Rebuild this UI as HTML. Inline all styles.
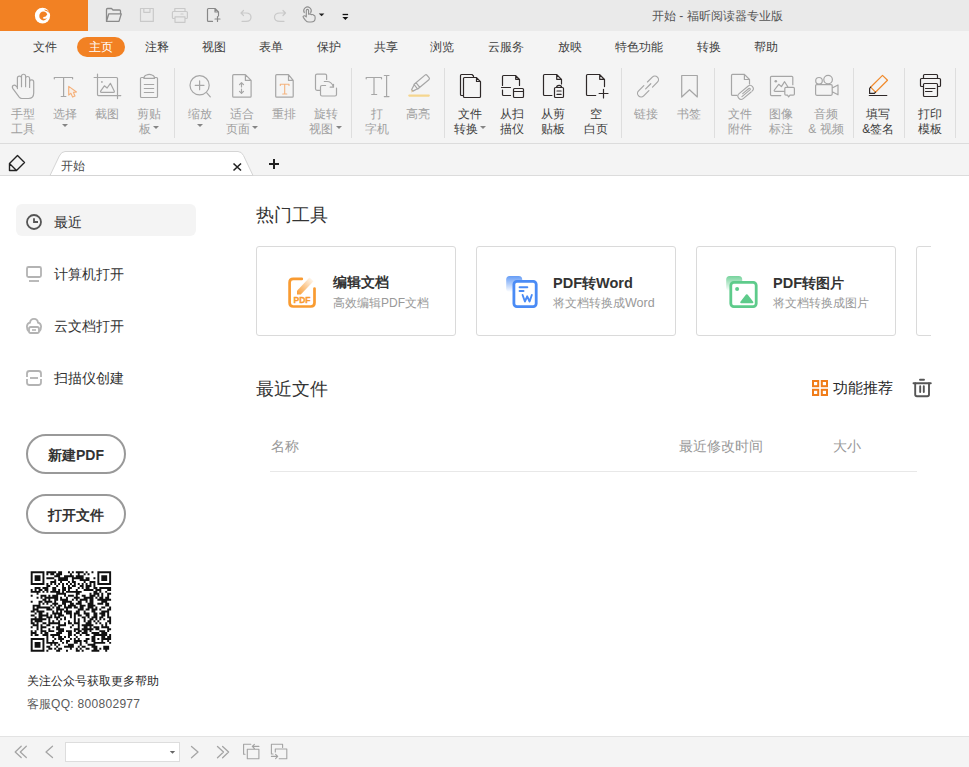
<!DOCTYPE html>
<html><head><meta charset='utf-8'><style>
html,body{margin:0;padding:0;}
body{width:969px;height:767px;position:relative;overflow:hidden;font-family:'Liberation Sans',sans-serif;background:#fff;}
.t{position:absolute;white-space:nowrap;}
.ar{display:inline-block;width:0;height:0;border-left:3px solid transparent;border-right:3px solid transparent;border-top:3px solid #858585;vertical-align:top;margin-left:2.5px;position:relative;top:3px}
.ar1{top:1px;margin-left:0}
svg{position:absolute;left:0;top:0;}
</style></head><body>
<svg width='969' height='767' viewBox='0 0 969 767'></svg>
<div style='position:absolute;left:0px;top:0px;width:969px;height:31px;background:#EAEAEA;'></div><div style='position:absolute;left:0px;top:0px;width:88px;height:31px;background:#F28123;'></div><div style='position:absolute;left:0px;top:31px;width:969px;height:112px;background:#F4F4F4;'></div><div style='position:absolute;left:0px;top:143px;width:969px;height:1px;background:#DCDCDC;'></div><div style='position:absolute;left:0px;top:144px;width:969px;height:31px;background:#F4F4F4;'></div><div style='position:absolute;left:0px;top:175px;width:969px;height:1px;background:#DCDCDC;'></div><div style='position:absolute;left:0px;top:176px;width:969px;height:560px;background:#FFFFFF;'></div><div style='position:absolute;left:0px;top:736px;width:969px;height:1px;background:#E3E3E3;'></div><div style='position:absolute;left:0px;top:737px;width:969px;height:30px;background:#F4F4F4;'></div><div class='t' style='left:652px;top:9.5px;font-size:12px;line-height:12px;color:#555;font-weight:normal;'>开始 - 福昕阅读器专业版</div><div style='position:absolute;left:77px;top:37px;width:48px;height:20px;background:#F28123;border-radius:10px;'></div><div class='t' style='left:89px;top:40.8px;font-size:12px;line-height:12px;color:#FFFFFF;font-weight:normal;'>主页</div><div class='t' style='left:33px;top:41px;font-size:12px;line-height:12px;color:#404040;font-weight:normal;'>文件</div><div class='t' style='left:145px;top:41px;font-size:12px;line-height:12px;color:#404040;font-weight:normal;'>注释</div><div class='t' style='left:202px;top:41px;font-size:12px;line-height:12px;color:#404040;font-weight:normal;'>视图</div><div class='t' style='left:259px;top:41px;font-size:12px;line-height:12px;color:#404040;font-weight:normal;'>表单</div><div class='t' style='left:317px;top:41px;font-size:12px;line-height:12px;color:#404040;font-weight:normal;'>保护</div><div class='t' style='left:374px;top:41px;font-size:12px;line-height:12px;color:#404040;font-weight:normal;'>共享</div><div class='t' style='left:430px;top:41px;font-size:12px;line-height:12px;color:#404040;font-weight:normal;'>浏览</div><div class='t' style='left:488px;top:41px;font-size:12px;line-height:12px;color:#404040;font-weight:normal;'>云服务</div><div class='t' style='left:558px;top:41px;font-size:12px;line-height:12px;color:#404040;font-weight:normal;'>放映</div><div class='t' style='left:615px;top:41px;font-size:12px;line-height:12px;color:#404040;font-weight:normal;'>特色功能</div><div class='t' style='left:697px;top:41px;font-size:12px;line-height:12px;color:#404040;font-weight:normal;'>转换</div><div class='t' style='left:754px;top:41px;font-size:12px;line-height:12px;color:#404040;font-weight:normal;'>帮助</div><div class='t' style='left:-7.399999999999999px;width:60px;text-align:center;top:108px;font-size:12px;line-height:12px;color:#A0A0A0;font-weight:normal;'>手型</div><div class='t' style='left:-7.399999999999999px;width:60px;text-align:center;top:123px;font-size:12px;line-height:12px;color:#A0A0A0;font-weight:normal;'>工具</div><div class='t' style='left:34.5px;width:60px;text-align:center;top:108px;font-size:12px;line-height:12px;color:#A0A0A0;font-weight:normal;'>选择</div><div class='t' style='left:34.5px;width:60px;text-align:center;top:123px;font-size:12px;line-height:12px;color:#A0A0A0;font-weight:normal;'><span class='ar ar1'></span></div><div class='t' style='left:76.5px;width:60px;text-align:center;top:108px;font-size:12px;line-height:12px;color:#A0A0A0;font-weight:normal;'>截图</div><div class='t' style='left:119.0px;width:60px;text-align:center;top:108px;font-size:12px;line-height:12px;color:#A0A0A0;font-weight:normal;'>剪贴</div><div class='t' style='left:119.0px;width:60px;text-align:center;top:123px;font-size:12px;line-height:12px;color:#A0A0A0;font-weight:normal;'>板<span class='ar'></span></div><div class='t' style='left:169.5px;width:60px;text-align:center;top:108px;font-size:12px;line-height:12px;color:#A0A0A0;font-weight:normal;'>缩放</div><div class='t' style='left:169.5px;width:60px;text-align:center;top:123px;font-size:12px;line-height:12px;color:#A0A0A0;font-weight:normal;'><span class='ar ar1'></span></div><div class='t' style='left:212.0px;width:60px;text-align:center;top:108px;font-size:12px;line-height:12px;color:#A0A0A0;font-weight:normal;'>适合</div><div class='t' style='left:212.0px;width:60px;text-align:center;top:123px;font-size:12px;line-height:12px;color:#A0A0A0;font-weight:normal;'>页面<span class='ar'></span></div><div class='t' style='left:253.7px;width:60px;text-align:center;top:108px;font-size:12px;line-height:12px;color:#A0A0A0;font-weight:normal;'>重排</div><div class='t' style='left:295.6px;width:60px;text-align:center;top:108px;font-size:12px;line-height:12px;color:#A0A0A0;font-weight:normal;'>旋转</div><div class='t' style='left:295.6px;width:60px;text-align:center;top:123px;font-size:12px;line-height:12px;color:#A0A0A0;font-weight:normal;'>视图<span class='ar'></span></div><div class='t' style='left:346.5px;width:60px;text-align:center;top:108px;font-size:12px;line-height:12px;color:#A0A0A0;font-weight:normal;'>打</div><div class='t' style='left:346.5px;width:60px;text-align:center;top:123px;font-size:12px;line-height:12px;color:#A0A0A0;font-weight:normal;'>字机</div><div class='t' style='left:388.0px;width:60px;text-align:center;top:108px;font-size:12px;line-height:12px;color:#A0A0A0;font-weight:normal;'>高亮</div><div class='t' style='left:439.8px;width:60px;text-align:center;top:108px;font-size:12px;line-height:12px;color:#404040;font-weight:normal;'>文件</div><div class='t' style='left:439.8px;width:60px;text-align:center;top:123px;font-size:12px;line-height:12px;color:#404040;font-weight:normal;'>转换<span class='ar'></span></div><div class='t' style='left:481.5px;width:60px;text-align:center;top:108px;font-size:12px;line-height:12px;color:#404040;font-weight:normal;'>从扫</div><div class='t' style='left:481.5px;width:60px;text-align:center;top:123px;font-size:12px;line-height:12px;color:#404040;font-weight:normal;'>描仪</div><div class='t' style='left:523.3px;width:60px;text-align:center;top:108px;font-size:12px;line-height:12px;color:#404040;font-weight:normal;'>从剪</div><div class='t' style='left:523.3px;width:60px;text-align:center;top:123px;font-size:12px;line-height:12px;color:#404040;font-weight:normal;'>贴板</div><div class='t' style='left:566.0px;width:60px;text-align:center;top:108px;font-size:12px;line-height:12px;color:#404040;font-weight:normal;'>空</div><div class='t' style='left:566.0px;width:60px;text-align:center;top:123px;font-size:12px;line-height:12px;color:#404040;font-weight:normal;'>白页</div><div class='t' style='left:616.0px;width:60px;text-align:center;top:108px;font-size:12px;line-height:12px;color:#A0A0A0;font-weight:normal;'>链接</div><div class='t' style='left:658.5px;width:60px;text-align:center;top:108px;font-size:12px;line-height:12px;color:#A0A0A0;font-weight:normal;'>书签</div><div class='t' style='left:709.6px;width:60px;text-align:center;top:108px;font-size:12px;line-height:12px;color:#A0A0A0;font-weight:normal;'>文件</div><div class='t' style='left:709.6px;width:60px;text-align:center;top:123px;font-size:12px;line-height:12px;color:#A0A0A0;font-weight:normal;'>附件</div><div class='t' style='left:751.2px;width:60px;text-align:center;top:108px;font-size:12px;line-height:12px;color:#A0A0A0;font-weight:normal;'>图像</div><div class='t' style='left:751.2px;width:60px;text-align:center;top:123px;font-size:12px;line-height:12px;color:#A0A0A0;font-weight:normal;'>标注</div><div class='t' style='left:796.0px;width:60px;text-align:center;top:108px;font-size:12px;line-height:12px;color:#A0A0A0;font-weight:normal;'>音频</div><div class='t' style='left:796.0px;width:60px;text-align:center;top:123px;font-size:12px;line-height:12px;color:#A0A0A0;font-weight:normal;'>&amp; 视频</div><div class='t' style='left:848.3px;width:60px;text-align:center;top:108px;font-size:12px;line-height:12px;color:#404040;font-weight:normal;'>填写</div><div class='t' style='left:848.3px;width:60px;text-align:center;top:123px;font-size:12px;line-height:12px;color:#404040;font-weight:normal;'>&amp;签名</div><div class='t' style='left:899.8px;width:60px;text-align:center;top:108px;font-size:12px;line-height:12px;color:#404040;font-weight:normal;'>打印</div><div class='t' style='left:899.8px;width:60px;text-align:center;top:123px;font-size:12px;line-height:12px;color:#404040;font-weight:normal;'>模板</div><div style='position:absolute;left:174px;top:68px;width:1px;height:70px;background:#DEDEDE;'></div><div style='position:absolute;left:351px;top:68px;width:1px;height:70px;background:#DEDEDE;'></div><div style='position:absolute;left:444px;top:68px;width:1px;height:70px;background:#DEDEDE;'></div><div style='position:absolute;left:621px;top:68px;width:1px;height:70px;background:#DEDEDE;'></div><div style='position:absolute;left:714px;top:68px;width:1px;height:70px;background:#DEDEDE;'></div><div style='position:absolute;left:853px;top:68px;width:1px;height:70px;background:#DEDEDE;'></div><div style='position:absolute;left:904px;top:68px;width:1px;height:70px;background:#DEDEDE;'></div><div style='position:absolute;left:955px;top:68px;width:1px;height:70px;background:#DEDEDE;'></div><svg width='969' height='767' viewBox='0 0 969 767'><path d='M50 175.5 L59.3 156 Q61.5 151.5 65 151.5 L238 151.5 Q241.5 151.5 243.5 155.5 L253 175.5 Z' fill='#fff' stroke='#D5D5D5' stroke-width='1'/></svg><div class='t' style='left:61px;top:159.5px;font-size:12px;line-height:12px;color:#4A4A4A;font-weight:normal;'>开始</div><div style='position:absolute;left:16px;top:204px;width:180px;height:32px;background:#F4F4F4;border-radius:6px;'></div><div class='t' style='left:54px;top:215px;font-size:14px;line-height:14px;color:#333;font-weight:normal;'>最近</div><div class='t' style='left:54px;top:267px;font-size:14px;line-height:14px;color:#333;font-weight:normal;'>计算机打开</div><div class='t' style='left:54px;top:319px;font-size:14px;line-height:14px;color:#333;font-weight:normal;'>云文档打开</div><div class='t' style='left:54px;top:371px;font-size:14px;line-height:14px;color:#333;font-weight:normal;'>扫描仪创建</div><div style='position:absolute;left:26px;top:434px;width:96px;height:36px;border:2px solid #999;border-radius:20px;'></div><div style='position:absolute;left:26px;top:494px;width:96px;height:36px;border:2px solid #999;border-radius:20px;'></div><div class='t' style='left:48px;top:448px;font-size:14px;line-height:14px;color:#333;font-weight:bold;'>新建PDF</div><div class='t' style='left:48px;top:508px;font-size:14px;line-height:14px;color:#333;font-weight:bold;'>打开文件</div><div class='t' style='left:27px;top:674.5px;font-size:12px;line-height:12px;color:#2A2A2A;font-weight:normal;'>关注公众号获取更多帮助</div><div class='t' style='left:27px;top:698px;font-size:12px;line-height:12px;color:#5A5A5A;font-weight:normal;'>客服<span style='letter-spacing:0.3px'>QQ: 800802977</span></div><div class='t' style='left:256px;top:206px;font-size:18px;line-height:18px;color:#333;font-weight:normal;'>热门工具</div><div style='position:absolute;left:256px;top:246px;width:198px;height:88px;border:1px solid #DADADA;border-radius:3px;background:#fff'></div><div style='position:absolute;left:476px;top:246px;width:198px;height:88px;border:1px solid #DADADA;border-radius:3px;background:#fff'></div><div style='position:absolute;left:696px;top:246px;width:198px;height:88px;border:1px solid #DADADA;border-radius:3px;background:#fff'></div><div style='position:absolute;left:916px;top:246px;width:198px;height:88px;border:1px solid #DADADA;border-radius:3px;background:#fff'></div><div style='position:absolute;left:931px;top:240px;width:38px;height:100px;background:#FFFFFF;'></div><div class='t' style='left:333px;top:276px;font-size:13.5px;line-height:13.5px;color:#333;font-weight:bold;'>编辑文档</div><div class='t' style='left:333px;top:296.5px;font-size:12px;line-height:12px;color:#999;font-weight:normal;'>高效编辑PDF文档</div><div class='t' style='left:553px;top:276px;font-size:14.5px;line-height:14.5px;color:#333;font-weight:bold;'>PDF<span style='font-size:13.5px'>转</span>Word</div><div class='t' style='left:553px;top:296.5px;font-size:12px;line-height:12px;color:#999;font-weight:normal;'>将文档转换成<span style='font-size:12.5px'>Word</span></div><div class='t' style='left:773px;top:276px;font-size:14.5px;line-height:14.5px;color:#333;font-weight:bold;'>PDF<span style='font-size:13.5px'>转图片</span></div><div class='t' style='left:773px;top:296.5px;font-size:12px;line-height:12px;color:#999;font-weight:normal;'>将文档转换成图片</div><div class='t' style='left:256px;top:380px;font-size:18px;line-height:18px;color:#333;font-weight:normal;'>最近文件</div><div class='t' style='left:833px;top:381px;font-size:14.5px;line-height:14.5px;color:#2A2A2A;font-weight:normal;'>功能推荐</div><div class='t' style='left:270.5px;top:438.5px;font-size:14px;line-height:14px;color:#999;font-weight:normal;'>名称</div><div class='t' style='left:679px;top:438.5px;font-size:14px;line-height:14px;color:#999;font-weight:normal;'>最近修改时间</div><div class='t' style='left:833px;top:438.5px;font-size:14px;line-height:14px;color:#999;font-weight:normal;'>大小</div><div style='position:absolute;left:270px;top:471px;width:647px;height:1px;background:#E8E8E8;'></div><div style='position:absolute;left:65px;top:742px;width:113px;height:18px;border:1px solid #DDDDDD;background:#fff'></div>
<svg width='969' height='767' viewBox='0 0 969 767'>
<ellipse cx='42.5' cy='15.7' rx='7.6' ry='7.9' fill='#fff'/><ellipse cx='43.4' cy='15.9' rx='4.1' ry='4.5' fill='#F28123'/><path d='M42.8 18.2 Q45.8 19.6 48 17.4 Q48.8 16 48.6 13.8 L46.8 15 Q46 17 43.6 16.9 Z' fill='#fff'/><path d='M44.6 9.9 Q48.2 10.4 50.5 13.8' fill='none' stroke='#F28123' stroke-width='1'/><path d='M106.5 21.4 V9.5 Q106.5 8.5 107.5 8.5 H111.5 L113 10 H119.5 Q120.5 10 120.5 11 V13 M106.5 21.4 L108.8 13.8 H121.3 L119 21.4 Z' fill='none' stroke='#8A8A8A' stroke-width='1.3' stroke-linecap='round' stroke-linejoin='round' /><path d='M140.5 8.5 H153.3 V21.4 H140.5 Z M143.8 8.5 V12.3 H150 V8.5' fill='none' stroke='#C9C9C9' stroke-width='1.2' stroke-linecap='round' stroke-linejoin='round' /><path d='M174.8 11.5 V8.5 H185 V11.5 M175 18.5 H173.4 Q172.4 18.5 172.4 17.5 V12.5 Q172.4 11.5 173.4 11.5 H186.4 Q187.4 11.5 187.4 12.5 V17.5 Q187.4 18.5 186.4 18.5 H185 M175 16.8 H185 V22.3 H175 Z M181 14 H183' fill='none' stroke='#C9C9C9' stroke-width='1.2' stroke-linecap='round' stroke-linejoin='round' /><path d='M212.5 21.4 H208.5 Q207.5 21.4 207.5 20.4 V9.5 Q207.5 8.5 208.5 8.5 H215 L218.5 12 V16 M215 8.5 V12 H218.5 M215 19 H220 M217.5 16.5 V21.5' fill='none' stroke='#888' stroke-width='1.2' stroke-linecap='round' stroke-linejoin='round' /><path d='M243.5 10.5 L241 13 L243.5 15.5 M241.2 13 H246 Q251 13 251 17.2 Q251 21.3 246 21.3 H242' fill='none' stroke='#C9C9C9' stroke-width='1.2' stroke-linecap='round' stroke-linejoin='round' /><path d='M283 10.5 L285.5 13 L283 15.5 M285.3 13 H280 Q274.5 13 274.5 17.2 Q274.5 21.3 280 21.3 H284' fill='none' stroke='#C9C9C9' stroke-width='1.2' stroke-linecap='round' stroke-linejoin='round' /><path d='M306.3 16.5 V10.6 Q306.3 9.4 307.45 9.4 Q308.6 9.4 308.6 10.6 V14.2 Q310.3 13.4 311.3 14.6 Q313 14.1 314 15.4 Q315.1 15.6 315.1 17.1 V18.6 Q315.1 22 311 22 H309 Q307 22 305.5 20.3 L303.3 17.3 Q302.7 16.3 303.7 15.9 Q304.8 15.5 306.3 16.9 M304.3 12.6 A3.7 3.7 0 1 1 310.7 12.6' fill='none' stroke='#8E8E8E' stroke-width='1.1' stroke-linecap='round' stroke-linejoin='round' /><path d='M318.8 13.4 H324.4 L321.6 16.3 Z' fill='#222'/><path d='M342.6 14.5 H348.1' stroke='#111' stroke-width='1.3'/><path d='M342.4 16.9 H348.3 L345.35 20 Z' fill='#111'/><path d='M17.4 88.6 V78.1 A2.05 2.05 0 0 1 21.5 78.1 V76.3 A2.05 2.05 0 0 1 25.6 76.3 V78.1 A2.05 2.05 0 0 1 29.6 78.1 V82 A2.05 2.05 0 0 1 33.7 82 V93 Q33.7 98.5 28.5 98.5 H21.8 Q20.2 98.5 19.2 97.2 L12.9 88.6 Q11.7 86.6 13.1 85.5 Q14.6 84.5 16.2 86.1 L17.4 87.5 M21.5 78.1 V86.7 M25.6 76.3 V86.7 M29.6 82 V87.5' fill='none' stroke='#A6A6A6' stroke-width='1.2' stroke-linecap='round' stroke-linejoin='round' /><path d='M54.3 78.8 V77.5 H72.6 V78.8 M63.6 77.5 V96.5 M61.2 96.5 H65.9' fill='none' stroke='#A6A6A6' stroke-width='1.2' stroke-linecap='round' stroke-linejoin='round' /><path d='M68.7 86.4 V95.1 L70.9 93.3 L72.6 97.1 L75 96 L73.4 92.4 L76.5 92 Z' fill='#F8EEE6' stroke='#F4B07A' stroke-width='1.1' stroke-linejoin='round'/><path d='M94.1 77.5 H116.5 Q117.5 77.5 117.5 78.5 V98.6 M97.5 74.1 V94.6 Q97.5 95.6 98.5 95.6 H120.8' fill='none' stroke='#A6A6A6' stroke-width='1.2' stroke-linecap='round' stroke-linejoin='round' /><path d='M101.5 92.3 Q100 92.3 100.8 90.9 L104.4 85.8 L107.1 88 L110.4 83.3 L114.2 90.9 Q114.9 92.3 113.4 92.3 Z' fill='none' stroke='#A6A6A6' stroke-width='1.2' stroke-linecap='round' stroke-linejoin='round' /><circle cx='101.9' cy='81.9' r='0.9' fill='#A6A6A6'/><path d='M143.8 77.5 H141.5 Q140.5 77.5 140.5 78.5 V96.5 Q140.5 97.5 141.5 97.5 H156.5 Q157.5 97.5 157.5 96.5 V78.5 Q157.5 77.5 156.5 77.5 H154.6 M143.9 78.4 H154.6 Q154.6 75.8 152 75 Q150.5 74.3 149.25 74.3 Q148 74.3 146.5 75 Q143.9 75.8 143.9 78.4 Z M144.3 84.5 H153.7 M144.3 88.5 H153.7 M144.3 92.5 H153.7' fill='none' stroke='#A6A6A6' stroke-width='1.2' stroke-linecap='round' stroke-linejoin='round' /><path d='M206.8 92.8 L210.3 96.8 M195.2 85.3 H204 M199.6 80.9 V89.7' fill='none' stroke='#A6A6A6' stroke-width='1.2' stroke-linecap='round' stroke-linejoin='round' /><circle cx='199.6' cy='85.3' r='9.6' fill='none' stroke='#A6A6A6' stroke-width='1.2'/><path d='M245.4 74.7 H233.7 Q232.7 74.7 232.7 75.7 V96.2 Q232.7 97.2 233.7 97.2 H250.1 Q251.1 97.2 251.1 96.2 V80.4 Z M245.4 74.7 V80.4 H251.1 M239.5 84.7 L241.5 82.7 L243.5 84.7 M241.5 82.9 V87 M241.5 89.2 V93.4 M239.5 91.4 L241.5 93.4 L243.5 91.4' fill='none' stroke='#A6A6A6' stroke-width='1.2' stroke-linecap='round' stroke-linejoin='round' /><path d='M288.5 74.7 H276.7 Q275.7 74.7 275.7 75.7 V96.2 Q275.7 97.2 276.7 97.2 H292.2 Q293.2 97.2 293.2 96.2 V80.4 Z M288.5 74.7 V80.4 H293.2' fill='none' stroke='#A6A6A6' stroke-width='1.2' stroke-linecap='round' stroke-linejoin='round' /><path d='M280.3 85.5 V84.2 H289 V85.5 M284.7 84.2 V94 M282.7 94 H286.8' fill='none' stroke='#F4B27C' stroke-width='1.1' stroke-linecap='round' stroke-linejoin='round' /><path d='M320.4 90.3 H317 Q315.5 90.3 315.5 88.8 V75.6 Q315.5 74.1 317 74.1 H325.1 Q326.6 74.1 326.6 75.6 V79.4' fill='none' stroke='#A6A6A6' stroke-width='1.2' stroke-linecap='round' stroke-linejoin='round' /><path d='M325.6 85.5 H322 Q320.5 85.5 320.5 87 V94.5 Q320.5 96 322 96 H335 Q336.5 96 336.5 94.5 V88.2 M324.3 81.5 H327 Q331.5 81.5 333.5 87 M333.5 84.3 V87.2 H330.2' fill='none' stroke='#A6A6A6' stroke-width='1.2' stroke-linecap='round' stroke-linejoin='round' /><path d='M366.2 78.8 V77.5 H381.5 V78.8 M374 77.5 V94.5 M371.7 94.5 H376.7 M386.6 75.5 V96.6 M384.3 75.5 H389 M384.3 96.6 H389' fill='none' stroke='#A6A6A6' stroke-width='1.2' stroke-linecap='round' stroke-linejoin='round' /><g transform='translate(418.5,84.5) rotate(-40)'><path d='M-3.5 -3 H11 Q12.5 -3 12.5 -1.5 V1.5 Q12.5 3 11 3 H-3.5 Z M-0.8 -3 V3 M-3.5 -2.5 L-8.5 -0.5 V1.5 L-3.5 2.5' fill='none' stroke='#A6A6A6' stroke-width='1.2' stroke-linejoin='round'/><path d='M-8.5 -0.5 L-10.5 1.8 L-8.5 1.5 Z' fill='#D9B77B'/></g><path d='M409.3 95.6 H428.8' fill='none' stroke='#F5D68F' stroke-width='2.2' stroke-linecap='round' stroke-linejoin='round' /><path d='M463.5 95.5 H461.5 Q460.5 95.5 460.5 94.5 V75.5 Q460.5 74.5 461.5 74.5 H472 L473.5 76 V77.5 M476.3 77.5 H464.5 Q463.5 77.5 463.5 78.5 V96.5 Q463.5 97.5 464.5 97.5 H479.5 Q480.5 97.5 480.5 96.5 V81.7 Z M476.5 77.7 V81.5 H480.3' fill='none' stroke='#2E2828' stroke-width='1.2' stroke-linecap='round' stroke-linejoin='round' /><path d='M502.5 85.5 V76.5 Q502.5 75.5 503.5 75.5 H515.5 L519.5 79.5 V85.5 M515.7 75.7 V79.3 H519.3 M502.5 90 V94.5 Q502.5 95.5 503.5 95.5 H510.5 M501.5 87.5 H510.5 M514.5 88.5 H522.5 Q523.5 88.5 523.5 89.5 V96.5 Q523.5 97.5 522.5 97.5 H514.5 Q513.5 97.5 513.5 96.5 V89.5 Q513.5 88.5 514.5 88.5 Z M513.5 91.5 H523.5' fill='none' stroke='#2E2828' stroke-width='1.2' stroke-linecap='round' stroke-linejoin='round' /><path d='M551.9 95.5 H544.5 Q543.5 95.5 543.5 94.5 V75.5 Q543.5 74.5 544.5 74.5 H556.6 L561.5 79.4 V83.9 M556.7 74.7 V79.3 H561.3 M555.5 87.5 Q554.5 87.5 554.5 88.5 V96.5 Q554.5 97.5 555.5 97.5 H562.5 Q563.5 97.5 563.5 96.5 V88.5 Q563.5 87.5 562.5 87.5 M556.6 87.5 Q556.6 85.4 559.1 85.4 Q561.6 85.4 561.6 87.5 Z M557 91 H561.1 M557 94.4 H561.1' fill='none' stroke='#2E2828' stroke-width='1.2' stroke-linecap='round' stroke-linejoin='round' /><path d='M595.7 95.5 H587.5 Q586.5 95.5 586.5 94.5 V75.5 Q586.5 74.5 587.5 74.5 H599.5 L604.5 79.5 V86.6 M599.7 74.7 V79.3 H604.3 M599.1 93.5 H608 M603.5 89.3 V97.9' fill='none' stroke='#2E2828' stroke-width='1.2' stroke-linecap='round' stroke-linejoin='round' /><g transform='translate(647.5,87) rotate(-45)' fill='none' stroke='#A6A6A6' stroke-width='1.2' stroke-linecap='round'><path d='M3.5 -3.6 H10.4 A3.6 3.6 0 0 1 10.4 3.6 H3.5 M-1.6 -3.6 H-9 A3.6 3.6 0 0 0 -9 3.6 H-1.6 M-2.6 0 H4.6'/></g><path d='M681.7 75.5 H697.3 V97 L689.5 89.7 L681.7 97 Z' fill='none' stroke='#A6A6A6' stroke-width='1.2' stroke-linecap='round' stroke-linejoin='round' /><path d='M736.8 95.4 H732.5 Q731.5 95.4 731.5 94.4 V75.4 Q731.5 74.4 732.5 74.4 H744.4 L749.5 79.5 V83.9 M744.4 74.4 V79.5 H749.5' fill='none' stroke='#A6A6A6' stroke-width='1.2' stroke-linecap='round' stroke-linejoin='round' /><g transform='translate(745.6,92.4) rotate(-40)' fill='none' stroke='#A6A6A6' stroke-width='1.1' stroke-linecap='round'><path d='M4.5 3.2 H-5.8 A3.2 3.2 0 0 1 -5.8 -3.2 H5.8 A3.2 3.2 0 0 1 5.8 3.2 M-5.5 0.9 H5 A0.9 0.9 0 0 0 5 -0.9 H-3'/></g><path d='M780.8 95.6 H771.5 Q770.5 95.6 770.5 94.6 V77.3 Q770.5 76.3 771.5 76.3 H791.8 Q792.8 76.3 792.8 77.3 V84.7 M784.4 91.3 H775.3 Q773.6 91.3 774.4 90 L778.7 84.3 L781.4 86.6 L784.6 81.7 L787.8 86.8' fill='none' stroke='#A6A6A6' stroke-width='1.2' stroke-linecap='round' stroke-linejoin='round' /><circle cx='775.8' cy='81.3' r='1.3' fill='#A6A6A6'/><path d='M786 87.3 H793.2 Q794.4 87.3 794.4 88.5 V94 Q794.4 95.2 793.2 95.2 H790 L788.6 96.9 L787.6 95.2 H786 Q784.8 95.2 784.8 94 V88.5 Q784.8 87.3 786 87.3 Z' fill='none' stroke='#A6A6A6' stroke-width='1.2' stroke-linecap='round' stroke-linejoin='round' /><g fill='none' stroke='#A6A6A6' stroke-width='1.2'><circle cx='819' cy='80.8' r='3.3'/><circle cx='828.1' cy='79.6' r='4.3'/></g><path d='M816.8 84.6 H831 Q832.2 84.6 832.2 85.8 V94.1 Q832.2 95.3 831 95.3 H816.8 Q815.6 95.3 815.6 94.1 V85.8 Q815.6 84.6 816.8 84.6 Z M832.2 88 L838 85 V94.8 L832.2 91.8' fill='none' stroke='#A6A6A6' stroke-width='1.2' stroke-linecap='round' stroke-linejoin='round' /><path d='M870.6 87.2 L882.5 75.4 L887.5 80.3 L875.5 92.2 Z' fill='none' stroke='#F08A2C' stroke-width='1.2' stroke-linecap='round' stroke-linejoin='round' /><path d='M870.6 87.2 L869.6 88.5 V93.4 H874.4 L875.5 92.2' fill='none' stroke='#2E2828' stroke-width='1.2' stroke-linecap='round' stroke-linejoin='round' /><path d='M869.3 95.5 H886.8' fill='none' stroke='#2E2828' stroke-width='1.2' stroke-linecap='round' stroke-linejoin='round' /><path d='M923.5 78.5 V75.5 Q923.5 74.5 924.5 74.5 H936.5 Q937.5 74.5 937.5 75.5 V78.5 M923 86.5 H921.5 Q920.5 86.5 920.5 85.5 V79.5 Q920.5 78.5 921.5 78.5 H939.5 Q940.5 78.5 940.5 79.5 V85.5 Q940.5 86.5 939.5 86.5 H938 M924.5 83.5 H936.5 Q937.5 83.5 937.5 84.5 V95.5 Q937.5 96.5 936.5 96.5 H924.5 Q923.5 96.5 923.5 95.5 V84.5 Q923.5 83.5 924.5 83.5 Z M925.5 88.5 H935 M925.5 91.5 H932' fill='none' stroke='#2E2828' stroke-width='1.2' stroke-linecap='round' stroke-linejoin='round' /><path d='M233.5 163.5 L241 170.5 M241 163.5 L233.5 170.5' stroke='#222' stroke-width='1.6'/><path d='M269 164 H279 M274 159 V169' stroke='#222' stroke-width='2'/><path d='M9.5 163.5 L17.5 155.5 L24.5 162.5 L16.5 170.5 H9.5 Z M9.5 163.5 L16.5 170.5' fill='none' stroke='#222' stroke-width='1.4' stroke-linejoin='round'/><circle cx='34' cy='222' r='7' fill='none' stroke='#555' stroke-width='1.8'/><path d='M34 218.2 V222 H38' fill='none' stroke='#555' stroke-width='1.8'/><rect x='27' y='267' width='14' height='10' rx='1.5' fill='none' stroke='#B3B3B3' stroke-width='1.8'/><path d='M29 281 H39' stroke='#B3B3B3' stroke-width='1.8'/><path d='M28.7 331.5 Q26.9 329.5 26.9 326.5 Q27.1 323.3 30 322.7 Q30.4 318.9 34 318.9 Q37.6 318.9 38 322.7 Q40.9 323.3 41.1 326.5 Q41.1 329.5 39.3 331.5' fill='none' stroke='#B3B3B3' stroke-width='1.8'/><rect x='29' y='327' width='10' height='6' rx='1.8' fill='#fff' stroke='#B3B3B3' stroke-width='1.8'/><path d='M32 330 H36' stroke='#B3B3B3' stroke-width='1.6'/><path d='M27 377 V373.5 Q27 371 29.5 371 H38.5 Q41 371 41 373.5 V377 M27 379 V382.5 Q27 385 29.5 385 H38.5 Q41 385 41 382.5 V379' fill='none' stroke='#B3B3B3' stroke-width='1.8'/><path d='M30 378 H38' stroke='#B3B3B3' stroke-width='1.8'/><path d='M30.70 571.30h1.96v1.96h-1.96zM32.66 571.30h1.96v1.96h-1.96zM34.62 571.30h1.96v1.96h-1.96zM36.58 571.30h1.96v1.96h-1.96zM38.54 571.30h1.96v1.96h-1.96zM40.50 571.30h1.96v1.96h-1.96zM42.47 571.30h1.96v1.96h-1.96zM46.39 571.30h1.96v1.96h-1.96zM48.35 571.30h1.96v1.96h-1.96zM50.31 571.30h1.96v1.96h-1.96zM52.27 571.30h1.96v1.96h-1.96zM54.23 571.30h1.96v1.96h-1.96zM58.15 571.30h1.96v1.96h-1.96zM60.11 571.30h1.96v1.96h-1.96zM67.96 571.30h1.96v1.96h-1.96zM71.88 571.30h1.96v1.96h-1.96zM75.80 571.30h1.96v1.96h-1.96zM77.76 571.30h1.96v1.96h-1.96zM79.72 571.30h1.96v1.96h-1.96zM81.69 571.30h1.96v1.96h-1.96zM85.61 571.30h1.96v1.96h-1.96zM91.49 571.30h1.96v1.96h-1.96zM97.37 571.30h1.96v1.96h-1.96zM99.33 571.30h1.96v1.96h-1.96zM101.30 571.30h1.96v1.96h-1.96zM103.26 571.30h1.96v1.96h-1.96zM105.22 571.30h1.96v1.96h-1.96zM107.18 571.30h1.96v1.96h-1.96zM109.14 571.30h1.96v1.96h-1.96zM30.70 573.26h1.96v1.96h-1.96zM42.47 573.26h1.96v1.96h-1.96zM46.39 573.26h1.96v1.96h-1.96zM50.31 573.26h1.96v1.96h-1.96zM52.27 573.26h1.96v1.96h-1.96zM56.19 573.26h1.96v1.96h-1.96zM58.15 573.26h1.96v1.96h-1.96zM60.11 573.26h1.96v1.96h-1.96zM69.92 573.26h1.96v1.96h-1.96zM77.76 573.26h1.96v1.96h-1.96zM83.65 573.26h1.96v1.96h-1.96zM87.57 573.26h1.96v1.96h-1.96zM97.37 573.26h1.96v1.96h-1.96zM109.14 573.26h1.96v1.96h-1.96zM30.70 575.22h1.96v1.96h-1.96zM34.62 575.22h1.96v1.96h-1.96zM36.58 575.22h1.96v1.96h-1.96zM38.54 575.22h1.96v1.96h-1.96zM42.47 575.22h1.96v1.96h-1.96zM54.23 575.22h1.96v1.96h-1.96zM56.19 575.22h1.96v1.96h-1.96zM58.15 575.22h1.96v1.96h-1.96zM64.04 575.22h1.96v1.96h-1.96zM66.00 575.22h1.96v1.96h-1.96zM67.96 575.22h1.96v1.96h-1.96zM69.92 575.22h1.96v1.96h-1.96zM71.88 575.22h1.96v1.96h-1.96zM75.80 575.22h1.96v1.96h-1.96zM77.76 575.22h1.96v1.96h-1.96zM79.72 575.22h1.96v1.96h-1.96zM81.69 575.22h1.96v1.96h-1.96zM97.37 575.22h1.96v1.96h-1.96zM101.30 575.22h1.96v1.96h-1.96zM103.26 575.22h1.96v1.96h-1.96zM105.22 575.22h1.96v1.96h-1.96zM109.14 575.22h1.96v1.96h-1.96zM30.70 577.18h1.96v1.96h-1.96zM34.62 577.18h1.96v1.96h-1.96zM36.58 577.18h1.96v1.96h-1.96zM38.54 577.18h1.96v1.96h-1.96zM42.47 577.18h1.96v1.96h-1.96zM46.39 577.18h1.96v1.96h-1.96zM48.35 577.18h1.96v1.96h-1.96zM50.31 577.18h1.96v1.96h-1.96zM52.27 577.18h1.96v1.96h-1.96zM58.15 577.18h1.96v1.96h-1.96zM60.11 577.18h1.96v1.96h-1.96zM62.08 577.18h1.96v1.96h-1.96zM64.04 577.18h1.96v1.96h-1.96zM66.00 577.18h1.96v1.96h-1.96zM71.88 577.18h1.96v1.96h-1.96zM73.84 577.18h1.96v1.96h-1.96zM75.80 577.18h1.96v1.96h-1.96zM77.76 577.18h1.96v1.96h-1.96zM79.72 577.18h1.96v1.96h-1.96zM81.69 577.18h1.96v1.96h-1.96zM85.61 577.18h1.96v1.96h-1.96zM87.57 577.18h1.96v1.96h-1.96zM93.45 577.18h1.96v1.96h-1.96zM97.37 577.18h1.96v1.96h-1.96zM101.30 577.18h1.96v1.96h-1.96zM103.26 577.18h1.96v1.96h-1.96zM105.22 577.18h1.96v1.96h-1.96zM109.14 577.18h1.96v1.96h-1.96zM30.70 579.14h1.96v1.96h-1.96zM34.62 579.14h1.96v1.96h-1.96zM36.58 579.14h1.96v1.96h-1.96zM38.54 579.14h1.96v1.96h-1.96zM42.47 579.14h1.96v1.96h-1.96zM54.23 579.14h1.96v1.96h-1.96zM58.15 579.14h1.96v1.96h-1.96zM60.11 579.14h1.96v1.96h-1.96zM62.08 579.14h1.96v1.96h-1.96zM64.04 579.14h1.96v1.96h-1.96zM66.00 579.14h1.96v1.96h-1.96zM71.88 579.14h1.96v1.96h-1.96zM79.72 579.14h1.96v1.96h-1.96zM81.69 579.14h1.96v1.96h-1.96zM83.65 579.14h1.96v1.96h-1.96zM85.61 579.14h1.96v1.96h-1.96zM87.57 579.14h1.96v1.96h-1.96zM97.37 579.14h1.96v1.96h-1.96zM101.30 579.14h1.96v1.96h-1.96zM103.26 579.14h1.96v1.96h-1.96zM105.22 579.14h1.96v1.96h-1.96zM109.14 579.14h1.96v1.96h-1.96zM30.70 581.10h1.96v1.96h-1.96zM42.47 581.10h1.96v1.96h-1.96zM50.31 581.10h1.96v1.96h-1.96zM52.27 581.10h1.96v1.96h-1.96zM54.23 581.10h1.96v1.96h-1.96zM60.11 581.10h1.96v1.96h-1.96zM67.96 581.10h1.96v1.96h-1.96zM71.88 581.10h1.96v1.96h-1.96zM73.84 581.10h1.96v1.96h-1.96zM83.65 581.10h1.96v1.96h-1.96zM89.53 581.10h1.96v1.96h-1.96zM91.49 581.10h1.96v1.96h-1.96zM93.45 581.10h1.96v1.96h-1.96zM97.37 581.10h1.96v1.96h-1.96zM109.14 581.10h1.96v1.96h-1.96zM30.70 583.07h1.96v1.96h-1.96zM32.66 583.07h1.96v1.96h-1.96zM34.62 583.07h1.96v1.96h-1.96zM36.58 583.07h1.96v1.96h-1.96zM38.54 583.07h1.96v1.96h-1.96zM40.50 583.07h1.96v1.96h-1.96zM42.47 583.07h1.96v1.96h-1.96zM46.39 583.07h1.96v1.96h-1.96zM50.31 583.07h1.96v1.96h-1.96zM54.23 583.07h1.96v1.96h-1.96zM58.15 583.07h1.96v1.96h-1.96zM62.08 583.07h1.96v1.96h-1.96zM66.00 583.07h1.96v1.96h-1.96zM69.92 583.07h1.96v1.96h-1.96zM73.84 583.07h1.96v1.96h-1.96zM77.76 583.07h1.96v1.96h-1.96zM81.69 583.07h1.96v1.96h-1.96zM85.61 583.07h1.96v1.96h-1.96zM89.53 583.07h1.96v1.96h-1.96zM93.45 583.07h1.96v1.96h-1.96zM97.37 583.07h1.96v1.96h-1.96zM99.33 583.07h1.96v1.96h-1.96zM101.30 583.07h1.96v1.96h-1.96zM103.26 583.07h1.96v1.96h-1.96zM105.22 583.07h1.96v1.96h-1.96zM107.18 583.07h1.96v1.96h-1.96zM109.14 583.07h1.96v1.96h-1.96zM46.39 585.03h1.96v1.96h-1.96zM48.35 585.03h1.96v1.96h-1.96zM56.19 585.03h1.96v1.96h-1.96zM62.08 585.03h1.96v1.96h-1.96zM67.96 585.03h1.96v1.96h-1.96zM71.88 585.03h1.96v1.96h-1.96zM73.84 585.03h1.96v1.96h-1.96zM79.72 585.03h1.96v1.96h-1.96zM81.69 585.03h1.96v1.96h-1.96zM85.61 585.03h1.96v1.96h-1.96zM87.57 585.03h1.96v1.96h-1.96zM89.53 585.03h1.96v1.96h-1.96zM93.45 585.03h1.96v1.96h-1.96zM34.62 586.99h1.96v1.96h-1.96zM36.58 586.99h1.96v1.96h-1.96zM38.54 586.99h1.96v1.96h-1.96zM42.47 586.99h1.96v1.96h-1.96zM44.43 586.99h1.96v1.96h-1.96zM46.39 586.99h1.96v1.96h-1.96zM52.27 586.99h1.96v1.96h-1.96zM54.23 586.99h1.96v1.96h-1.96zM62.08 586.99h1.96v1.96h-1.96zM64.04 586.99h1.96v1.96h-1.96zM67.96 586.99h1.96v1.96h-1.96zM69.92 586.99h1.96v1.96h-1.96zM77.76 586.99h1.96v1.96h-1.96zM81.69 586.99h1.96v1.96h-1.96zM85.61 586.99h1.96v1.96h-1.96zM87.57 586.99h1.96v1.96h-1.96zM93.45 586.99h1.96v1.96h-1.96zM95.41 586.99h1.96v1.96h-1.96zM99.33 586.99h1.96v1.96h-1.96zM101.30 586.99h1.96v1.96h-1.96zM103.26 586.99h1.96v1.96h-1.96zM105.22 586.99h1.96v1.96h-1.96zM107.18 586.99h1.96v1.96h-1.96zM109.14 586.99h1.96v1.96h-1.96zM30.70 588.95h1.96v1.96h-1.96zM34.62 588.95h1.96v1.96h-1.96zM38.54 588.95h1.96v1.96h-1.96zM40.50 588.95h1.96v1.96h-1.96zM44.43 588.95h1.96v1.96h-1.96zM46.39 588.95h1.96v1.96h-1.96zM52.27 588.95h1.96v1.96h-1.96zM54.23 588.95h1.96v1.96h-1.96zM58.15 588.95h1.96v1.96h-1.96zM62.08 588.95h1.96v1.96h-1.96zM64.04 588.95h1.96v1.96h-1.96zM67.96 588.95h1.96v1.96h-1.96zM75.80 588.95h1.96v1.96h-1.96zM83.65 588.95h1.96v1.96h-1.96zM85.61 588.95h1.96v1.96h-1.96zM87.57 588.95h1.96v1.96h-1.96zM89.53 588.95h1.96v1.96h-1.96zM91.49 588.95h1.96v1.96h-1.96zM95.41 588.95h1.96v1.96h-1.96zM97.37 588.95h1.96v1.96h-1.96zM99.33 588.95h1.96v1.96h-1.96zM107.18 588.95h1.96v1.96h-1.96zM109.14 588.95h1.96v1.96h-1.96zM30.70 590.91h1.96v1.96h-1.96zM32.66 590.91h1.96v1.96h-1.96zM34.62 590.91h1.96v1.96h-1.96zM36.58 590.91h1.96v1.96h-1.96zM38.54 590.91h1.96v1.96h-1.96zM42.47 590.91h1.96v1.96h-1.96zM46.39 590.91h1.96v1.96h-1.96zM50.31 590.91h1.96v1.96h-1.96zM52.27 590.91h1.96v1.96h-1.96zM54.23 590.91h1.96v1.96h-1.96zM56.19 590.91h1.96v1.96h-1.96zM58.15 590.91h1.96v1.96h-1.96zM62.08 590.91h1.96v1.96h-1.96zM66.00 590.91h1.96v1.96h-1.96zM67.96 590.91h1.96v1.96h-1.96zM69.92 590.91h1.96v1.96h-1.96zM71.88 590.91h1.96v1.96h-1.96zM73.84 590.91h1.96v1.96h-1.96zM75.80 590.91h1.96v1.96h-1.96zM77.76 590.91h1.96v1.96h-1.96zM79.72 590.91h1.96v1.96h-1.96zM93.45 590.91h1.96v1.96h-1.96zM95.41 590.91h1.96v1.96h-1.96zM99.33 590.91h1.96v1.96h-1.96zM105.22 590.91h1.96v1.96h-1.96zM36.58 592.87h1.96v1.96h-1.96zM56.19 592.87h1.96v1.96h-1.96zM58.15 592.87h1.96v1.96h-1.96zM60.11 592.87h1.96v1.96h-1.96zM62.08 592.87h1.96v1.96h-1.96zM64.04 592.87h1.96v1.96h-1.96zM75.80 592.87h1.96v1.96h-1.96zM77.76 592.87h1.96v1.96h-1.96zM89.53 592.87h1.96v1.96h-1.96zM93.45 592.87h1.96v1.96h-1.96zM95.41 592.87h1.96v1.96h-1.96zM97.37 592.87h1.96v1.96h-1.96zM101.30 592.87h1.96v1.96h-1.96zM107.18 592.87h1.96v1.96h-1.96zM109.14 592.87h1.96v1.96h-1.96zM30.70 594.83h1.96v1.96h-1.96zM40.50 594.83h1.96v1.96h-1.96zM42.47 594.83h1.96v1.96h-1.96zM44.43 594.83h1.96v1.96h-1.96zM48.35 594.83h1.96v1.96h-1.96zM52.27 594.83h1.96v1.96h-1.96zM54.23 594.83h1.96v1.96h-1.96zM56.19 594.83h1.96v1.96h-1.96zM64.04 594.83h1.96v1.96h-1.96zM67.96 594.83h1.96v1.96h-1.96zM69.92 594.83h1.96v1.96h-1.96zM71.88 594.83h1.96v1.96h-1.96zM75.80 594.83h1.96v1.96h-1.96zM81.69 594.83h1.96v1.96h-1.96zM83.65 594.83h1.96v1.96h-1.96zM89.53 594.83h1.96v1.96h-1.96zM91.49 594.83h1.96v1.96h-1.96zM93.45 594.83h1.96v1.96h-1.96zM97.37 594.83h1.96v1.96h-1.96zM101.30 594.83h1.96v1.96h-1.96zM107.18 594.83h1.96v1.96h-1.96zM36.58 596.79h1.96v1.96h-1.96zM40.50 596.79h1.96v1.96h-1.96zM44.43 596.79h1.96v1.96h-1.96zM46.39 596.79h1.96v1.96h-1.96zM48.35 596.79h1.96v1.96h-1.96zM50.31 596.79h1.96v1.96h-1.96zM52.27 596.79h1.96v1.96h-1.96zM54.23 596.79h1.96v1.96h-1.96zM56.19 596.79h1.96v1.96h-1.96zM60.11 596.79h1.96v1.96h-1.96zM66.00 596.79h1.96v1.96h-1.96zM73.84 596.79h1.96v1.96h-1.96zM75.80 596.79h1.96v1.96h-1.96zM77.76 596.79h1.96v1.96h-1.96zM83.65 596.79h1.96v1.96h-1.96zM85.61 596.79h1.96v1.96h-1.96zM87.57 596.79h1.96v1.96h-1.96zM89.53 596.79h1.96v1.96h-1.96zM91.49 596.79h1.96v1.96h-1.96zM95.41 596.79h1.96v1.96h-1.96zM99.33 596.79h1.96v1.96h-1.96zM101.30 596.79h1.96v1.96h-1.96zM105.22 596.79h1.96v1.96h-1.96zM107.18 596.79h1.96v1.96h-1.96zM42.47 598.75h1.96v1.96h-1.96zM44.43 598.75h1.96v1.96h-1.96zM48.35 598.75h1.96v1.96h-1.96zM54.23 598.75h1.96v1.96h-1.96zM56.19 598.75h1.96v1.96h-1.96zM60.11 598.75h1.96v1.96h-1.96zM62.08 598.75h1.96v1.96h-1.96zM64.04 598.75h1.96v1.96h-1.96zM66.00 598.75h1.96v1.96h-1.96zM71.88 598.75h1.96v1.96h-1.96zM75.80 598.75h1.96v1.96h-1.96zM79.72 598.75h1.96v1.96h-1.96zM81.69 598.75h1.96v1.96h-1.96zM83.65 598.75h1.96v1.96h-1.96zM85.61 598.75h1.96v1.96h-1.96zM89.53 598.75h1.96v1.96h-1.96zM91.49 598.75h1.96v1.96h-1.96zM97.37 598.75h1.96v1.96h-1.96zM99.33 598.75h1.96v1.96h-1.96zM101.30 598.75h1.96v1.96h-1.96zM103.26 598.75h1.96v1.96h-1.96zM105.22 598.75h1.96v1.96h-1.96zM107.18 598.75h1.96v1.96h-1.96zM109.14 598.75h1.96v1.96h-1.96zM30.70 600.71h1.96v1.96h-1.96zM38.54 600.71h1.96v1.96h-1.96zM40.50 600.71h1.96v1.96h-1.96zM44.43 600.71h1.96v1.96h-1.96zM46.39 600.71h1.96v1.96h-1.96zM48.35 600.71h1.96v1.96h-1.96zM50.31 600.71h1.96v1.96h-1.96zM54.23 600.71h1.96v1.96h-1.96zM62.08 600.71h1.96v1.96h-1.96zM64.04 600.71h1.96v1.96h-1.96zM66.00 600.71h1.96v1.96h-1.96zM67.96 600.71h1.96v1.96h-1.96zM69.92 600.71h1.96v1.96h-1.96zM77.76 600.71h1.96v1.96h-1.96zM79.72 600.71h1.96v1.96h-1.96zM85.61 600.71h1.96v1.96h-1.96zM89.53 600.71h1.96v1.96h-1.96zM91.49 600.71h1.96v1.96h-1.96zM101.30 600.71h1.96v1.96h-1.96zM103.26 600.71h1.96v1.96h-1.96zM105.22 600.71h1.96v1.96h-1.96zM38.54 602.68h1.96v1.96h-1.96zM42.47 602.68h1.96v1.96h-1.96zM46.39 602.68h1.96v1.96h-1.96zM52.27 602.68h1.96v1.96h-1.96zM54.23 602.68h1.96v1.96h-1.96zM56.19 602.68h1.96v1.96h-1.96zM62.08 602.68h1.96v1.96h-1.96zM64.04 602.68h1.96v1.96h-1.96zM69.92 602.68h1.96v1.96h-1.96zM71.88 602.68h1.96v1.96h-1.96zM75.80 602.68h1.96v1.96h-1.96zM77.76 602.68h1.96v1.96h-1.96zM79.72 602.68h1.96v1.96h-1.96zM87.57 602.68h1.96v1.96h-1.96zM89.53 602.68h1.96v1.96h-1.96zM91.49 602.68h1.96v1.96h-1.96zM97.37 602.68h1.96v1.96h-1.96zM99.33 602.68h1.96v1.96h-1.96zM101.30 602.68h1.96v1.96h-1.96zM105.22 602.68h1.96v1.96h-1.96zM107.18 602.68h1.96v1.96h-1.96zM32.66 604.64h1.96v1.96h-1.96zM34.62 604.64h1.96v1.96h-1.96zM36.58 604.64h1.96v1.96h-1.96zM38.54 604.64h1.96v1.96h-1.96zM50.31 604.64h1.96v1.96h-1.96zM54.23 604.64h1.96v1.96h-1.96zM58.15 604.64h1.96v1.96h-1.96zM60.11 604.64h1.96v1.96h-1.96zM64.04 604.64h1.96v1.96h-1.96zM67.96 604.64h1.96v1.96h-1.96zM69.92 604.64h1.96v1.96h-1.96zM71.88 604.64h1.96v1.96h-1.96zM73.84 604.64h1.96v1.96h-1.96zM79.72 604.64h1.96v1.96h-1.96zM81.69 604.64h1.96v1.96h-1.96zM83.65 604.64h1.96v1.96h-1.96zM87.57 604.64h1.96v1.96h-1.96zM89.53 604.64h1.96v1.96h-1.96zM91.49 604.64h1.96v1.96h-1.96zM93.45 604.64h1.96v1.96h-1.96zM105.22 604.64h1.96v1.96h-1.96zM107.18 604.64h1.96v1.96h-1.96zM32.66 606.60h1.96v1.96h-1.96zM36.58 606.60h1.96v1.96h-1.96zM38.54 606.60h1.96v1.96h-1.96zM40.50 606.60h1.96v1.96h-1.96zM42.47 606.60h1.96v1.96h-1.96zM44.43 606.60h1.96v1.96h-1.96zM46.39 606.60h1.96v1.96h-1.96zM48.35 606.60h1.96v1.96h-1.96zM52.27 606.60h1.96v1.96h-1.96zM56.19 606.60h1.96v1.96h-1.96zM58.15 606.60h1.96v1.96h-1.96zM64.04 606.60h1.96v1.96h-1.96zM66.00 606.60h1.96v1.96h-1.96zM67.96 606.60h1.96v1.96h-1.96zM69.92 606.60h1.96v1.96h-1.96zM73.84 606.60h1.96v1.96h-1.96zM75.80 606.60h1.96v1.96h-1.96zM79.72 606.60h1.96v1.96h-1.96zM81.69 606.60h1.96v1.96h-1.96zM87.57 606.60h1.96v1.96h-1.96zM89.53 606.60h1.96v1.96h-1.96zM91.49 606.60h1.96v1.96h-1.96zM95.41 606.60h1.96v1.96h-1.96zM101.30 606.60h1.96v1.96h-1.96zM103.26 606.60h1.96v1.96h-1.96zM109.14 606.60h1.96v1.96h-1.96zM32.66 608.56h1.96v1.96h-1.96zM34.62 608.56h1.96v1.96h-1.96zM36.58 608.56h1.96v1.96h-1.96zM46.39 608.56h1.96v1.96h-1.96zM48.35 608.56h1.96v1.96h-1.96zM50.31 608.56h1.96v1.96h-1.96zM56.19 608.56h1.96v1.96h-1.96zM58.15 608.56h1.96v1.96h-1.96zM60.11 608.56h1.96v1.96h-1.96zM62.08 608.56h1.96v1.96h-1.96zM66.00 608.56h1.96v1.96h-1.96zM77.76 608.56h1.96v1.96h-1.96zM79.72 608.56h1.96v1.96h-1.96zM81.69 608.56h1.96v1.96h-1.96zM85.61 608.56h1.96v1.96h-1.96zM87.57 608.56h1.96v1.96h-1.96zM91.49 608.56h1.96v1.96h-1.96zM93.45 608.56h1.96v1.96h-1.96zM95.41 608.56h1.96v1.96h-1.96zM99.33 608.56h1.96v1.96h-1.96zM107.18 608.56h1.96v1.96h-1.96zM109.14 608.56h1.96v1.96h-1.96zM30.70 610.52h1.96v1.96h-1.96zM32.66 610.52h1.96v1.96h-1.96zM36.58 610.52h1.96v1.96h-1.96zM38.54 610.52h1.96v1.96h-1.96zM40.50 610.52h1.96v1.96h-1.96zM42.47 610.52h1.96v1.96h-1.96zM52.27 610.52h1.96v1.96h-1.96zM56.19 610.52h1.96v1.96h-1.96zM60.11 610.52h1.96v1.96h-1.96zM64.04 610.52h1.96v1.96h-1.96zM66.00 610.52h1.96v1.96h-1.96zM67.96 610.52h1.96v1.96h-1.96zM69.92 610.52h1.96v1.96h-1.96zM75.80 610.52h1.96v1.96h-1.96zM77.76 610.52h1.96v1.96h-1.96zM83.65 610.52h1.96v1.96h-1.96zM91.49 610.52h1.96v1.96h-1.96zM93.45 610.52h1.96v1.96h-1.96zM101.30 610.52h1.96v1.96h-1.96zM103.26 610.52h1.96v1.96h-1.96zM105.22 610.52h1.96v1.96h-1.96zM107.18 610.52h1.96v1.96h-1.96zM34.62 612.48h1.96v1.96h-1.96zM38.54 612.48h1.96v1.96h-1.96zM40.50 612.48h1.96v1.96h-1.96zM46.39 612.48h1.96v1.96h-1.96zM52.27 612.48h1.96v1.96h-1.96zM54.23 612.48h1.96v1.96h-1.96zM56.19 612.48h1.96v1.96h-1.96zM58.15 612.48h1.96v1.96h-1.96zM60.11 612.48h1.96v1.96h-1.96zM66.00 612.48h1.96v1.96h-1.96zM67.96 612.48h1.96v1.96h-1.96zM69.92 612.48h1.96v1.96h-1.96zM73.84 612.48h1.96v1.96h-1.96zM75.80 612.48h1.96v1.96h-1.96zM77.76 612.48h1.96v1.96h-1.96zM83.65 612.48h1.96v1.96h-1.96zM85.61 612.48h1.96v1.96h-1.96zM87.57 612.48h1.96v1.96h-1.96zM93.45 612.48h1.96v1.96h-1.96zM95.41 612.48h1.96v1.96h-1.96zM99.33 612.48h1.96v1.96h-1.96zM101.30 612.48h1.96v1.96h-1.96zM103.26 612.48h1.96v1.96h-1.96zM107.18 612.48h1.96v1.96h-1.96zM30.70 614.44h1.96v1.96h-1.96zM32.66 614.44h1.96v1.96h-1.96zM38.54 614.44h1.96v1.96h-1.96zM40.50 614.44h1.96v1.96h-1.96zM42.47 614.44h1.96v1.96h-1.96zM44.43 614.44h1.96v1.96h-1.96zM46.39 614.44h1.96v1.96h-1.96zM50.31 614.44h1.96v1.96h-1.96zM54.23 614.44h1.96v1.96h-1.96zM58.15 614.44h1.96v1.96h-1.96zM60.11 614.44h1.96v1.96h-1.96zM62.08 614.44h1.96v1.96h-1.96zM69.92 614.44h1.96v1.96h-1.96zM73.84 614.44h1.96v1.96h-1.96zM77.76 614.44h1.96v1.96h-1.96zM79.72 614.44h1.96v1.96h-1.96zM85.61 614.44h1.96v1.96h-1.96zM87.57 614.44h1.96v1.96h-1.96zM93.45 614.44h1.96v1.96h-1.96zM95.41 614.44h1.96v1.96h-1.96zM101.30 614.44h1.96v1.96h-1.96zM103.26 614.44h1.96v1.96h-1.96zM107.18 614.44h1.96v1.96h-1.96zM34.62 616.40h1.96v1.96h-1.96zM38.54 616.40h1.96v1.96h-1.96zM40.50 616.40h1.96v1.96h-1.96zM46.39 616.40h1.96v1.96h-1.96zM48.35 616.40h1.96v1.96h-1.96zM50.31 616.40h1.96v1.96h-1.96zM54.23 616.40h1.96v1.96h-1.96zM56.19 616.40h1.96v1.96h-1.96zM58.15 616.40h1.96v1.96h-1.96zM64.04 616.40h1.96v1.96h-1.96zM69.92 616.40h1.96v1.96h-1.96zM73.84 616.40h1.96v1.96h-1.96zM81.69 616.40h1.96v1.96h-1.96zM83.65 616.40h1.96v1.96h-1.96zM87.57 616.40h1.96v1.96h-1.96zM91.49 616.40h1.96v1.96h-1.96zM93.45 616.40h1.96v1.96h-1.96zM95.41 616.40h1.96v1.96h-1.96zM99.33 616.40h1.96v1.96h-1.96zM101.30 616.40h1.96v1.96h-1.96zM107.18 616.40h1.96v1.96h-1.96zM109.14 616.40h1.96v1.96h-1.96zM30.70 618.36h1.96v1.96h-1.96zM32.66 618.36h1.96v1.96h-1.96zM34.62 618.36h1.96v1.96h-1.96zM36.58 618.36h1.96v1.96h-1.96zM38.54 618.36h1.96v1.96h-1.96zM40.50 618.36h1.96v1.96h-1.96zM42.47 618.36h1.96v1.96h-1.96zM44.43 618.36h1.96v1.96h-1.96zM48.35 618.36h1.96v1.96h-1.96zM56.19 618.36h1.96v1.96h-1.96zM60.11 618.36h1.96v1.96h-1.96zM64.04 618.36h1.96v1.96h-1.96zM73.84 618.36h1.96v1.96h-1.96zM77.76 618.36h1.96v1.96h-1.96zM83.65 618.36h1.96v1.96h-1.96zM89.53 618.36h1.96v1.96h-1.96zM91.49 618.36h1.96v1.96h-1.96zM95.41 618.36h1.96v1.96h-1.96zM99.33 618.36h1.96v1.96h-1.96zM103.26 618.36h1.96v1.96h-1.96zM109.14 618.36h1.96v1.96h-1.96zM30.70 620.32h1.96v1.96h-1.96zM34.62 620.32h1.96v1.96h-1.96zM36.58 620.32h1.96v1.96h-1.96zM38.54 620.32h1.96v1.96h-1.96zM40.50 620.32h1.96v1.96h-1.96zM48.35 620.32h1.96v1.96h-1.96zM52.27 620.32h1.96v1.96h-1.96zM58.15 620.32h1.96v1.96h-1.96zM67.96 620.32h1.96v1.96h-1.96zM73.84 620.32h1.96v1.96h-1.96zM77.76 620.32h1.96v1.96h-1.96zM83.65 620.32h1.96v1.96h-1.96zM87.57 620.32h1.96v1.96h-1.96zM89.53 620.32h1.96v1.96h-1.96zM93.45 620.32h1.96v1.96h-1.96zM97.37 620.32h1.96v1.96h-1.96zM107.18 620.32h1.96v1.96h-1.96zM109.14 620.32h1.96v1.96h-1.96zM30.70 622.29h1.96v1.96h-1.96zM32.66 622.29h1.96v1.96h-1.96zM36.58 622.29h1.96v1.96h-1.96zM42.47 622.29h1.96v1.96h-1.96zM44.43 622.29h1.96v1.96h-1.96zM48.35 622.29h1.96v1.96h-1.96zM50.31 622.29h1.96v1.96h-1.96zM52.27 622.29h1.96v1.96h-1.96zM54.23 622.29h1.96v1.96h-1.96zM56.19 622.29h1.96v1.96h-1.96zM58.15 622.29h1.96v1.96h-1.96zM64.04 622.29h1.96v1.96h-1.96zM67.96 622.29h1.96v1.96h-1.96zM69.92 622.29h1.96v1.96h-1.96zM73.84 622.29h1.96v1.96h-1.96zM75.80 622.29h1.96v1.96h-1.96zM77.76 622.29h1.96v1.96h-1.96zM85.61 622.29h1.96v1.96h-1.96zM87.57 622.29h1.96v1.96h-1.96zM89.53 622.29h1.96v1.96h-1.96zM95.41 622.29h1.96v1.96h-1.96zM99.33 622.29h1.96v1.96h-1.96zM105.22 622.29h1.96v1.96h-1.96zM109.14 622.29h1.96v1.96h-1.96zM32.66 624.25h1.96v1.96h-1.96zM34.62 624.25h1.96v1.96h-1.96zM36.58 624.25h1.96v1.96h-1.96zM40.50 624.25h1.96v1.96h-1.96zM46.39 624.25h1.96v1.96h-1.96zM48.35 624.25h1.96v1.96h-1.96zM58.15 624.25h1.96v1.96h-1.96zM60.11 624.25h1.96v1.96h-1.96zM62.08 624.25h1.96v1.96h-1.96zM64.04 624.25h1.96v1.96h-1.96zM71.88 624.25h1.96v1.96h-1.96zM77.76 624.25h1.96v1.96h-1.96zM81.69 624.25h1.96v1.96h-1.96zM83.65 624.25h1.96v1.96h-1.96zM85.61 624.25h1.96v1.96h-1.96zM87.57 624.25h1.96v1.96h-1.96zM89.53 624.25h1.96v1.96h-1.96zM91.49 624.25h1.96v1.96h-1.96zM101.30 624.25h1.96v1.96h-1.96zM105.22 624.25h1.96v1.96h-1.96zM30.70 626.21h1.96v1.96h-1.96zM36.58 626.21h1.96v1.96h-1.96zM40.50 626.21h1.96v1.96h-1.96zM42.47 626.21h1.96v1.96h-1.96zM44.43 626.21h1.96v1.96h-1.96zM52.27 626.21h1.96v1.96h-1.96zM56.19 626.21h1.96v1.96h-1.96zM58.15 626.21h1.96v1.96h-1.96zM69.92 626.21h1.96v1.96h-1.96zM77.76 626.21h1.96v1.96h-1.96zM83.65 626.21h1.96v1.96h-1.96zM85.61 626.21h1.96v1.96h-1.96zM89.53 626.21h1.96v1.96h-1.96zM93.45 626.21h1.96v1.96h-1.96zM95.41 626.21h1.96v1.96h-1.96zM97.37 626.21h1.96v1.96h-1.96zM101.30 626.21h1.96v1.96h-1.96zM103.26 626.21h1.96v1.96h-1.96zM105.22 626.21h1.96v1.96h-1.96zM107.18 626.21h1.96v1.96h-1.96zM36.58 628.17h1.96v1.96h-1.96zM40.50 628.17h1.96v1.96h-1.96zM48.35 628.17h1.96v1.96h-1.96zM56.19 628.17h1.96v1.96h-1.96zM58.15 628.17h1.96v1.96h-1.96zM60.11 628.17h1.96v1.96h-1.96zM62.08 628.17h1.96v1.96h-1.96zM73.84 628.17h1.96v1.96h-1.96zM75.80 628.17h1.96v1.96h-1.96zM77.76 628.17h1.96v1.96h-1.96zM81.69 628.17h1.96v1.96h-1.96zM83.65 628.17h1.96v1.96h-1.96zM85.61 628.17h1.96v1.96h-1.96zM87.57 628.17h1.96v1.96h-1.96zM89.53 628.17h1.96v1.96h-1.96zM91.49 628.17h1.96v1.96h-1.96zM95.41 628.17h1.96v1.96h-1.96zM97.37 628.17h1.96v1.96h-1.96zM107.18 628.17h1.96v1.96h-1.96zM109.14 628.17h1.96v1.96h-1.96zM30.70 630.13h1.96v1.96h-1.96zM34.62 630.13h1.96v1.96h-1.96zM40.50 630.13h1.96v1.96h-1.96zM42.47 630.13h1.96v1.96h-1.96zM44.43 630.13h1.96v1.96h-1.96zM48.35 630.13h1.96v1.96h-1.96zM50.31 630.13h1.96v1.96h-1.96zM52.27 630.13h1.96v1.96h-1.96zM58.15 630.13h1.96v1.96h-1.96zM60.11 630.13h1.96v1.96h-1.96zM62.08 630.13h1.96v1.96h-1.96zM66.00 630.13h1.96v1.96h-1.96zM67.96 630.13h1.96v1.96h-1.96zM69.92 630.13h1.96v1.96h-1.96zM73.84 630.13h1.96v1.96h-1.96zM77.76 630.13h1.96v1.96h-1.96zM79.72 630.13h1.96v1.96h-1.96zM83.65 630.13h1.96v1.96h-1.96zM85.61 630.13h1.96v1.96h-1.96zM89.53 630.13h1.96v1.96h-1.96zM99.33 630.13h1.96v1.96h-1.96zM101.30 630.13h1.96v1.96h-1.96zM103.26 630.13h1.96v1.96h-1.96zM107.18 630.13h1.96v1.96h-1.96zM30.70 632.09h1.96v1.96h-1.96zM32.66 632.09h1.96v1.96h-1.96zM34.62 632.09h1.96v1.96h-1.96zM40.50 632.09h1.96v1.96h-1.96zM44.43 632.09h1.96v1.96h-1.96zM46.39 632.09h1.96v1.96h-1.96zM56.19 632.09h1.96v1.96h-1.96zM58.15 632.09h1.96v1.96h-1.96zM60.11 632.09h1.96v1.96h-1.96zM67.96 632.09h1.96v1.96h-1.96zM69.92 632.09h1.96v1.96h-1.96zM75.80 632.09h1.96v1.96h-1.96zM77.76 632.09h1.96v1.96h-1.96zM81.69 632.09h1.96v1.96h-1.96zM83.65 632.09h1.96v1.96h-1.96zM85.61 632.09h1.96v1.96h-1.96zM91.49 632.09h1.96v1.96h-1.96zM93.45 632.09h1.96v1.96h-1.96zM95.41 632.09h1.96v1.96h-1.96zM97.37 632.09h1.96v1.96h-1.96zM101.30 632.09h1.96v1.96h-1.96zM103.26 632.09h1.96v1.96h-1.96zM105.22 632.09h1.96v1.96h-1.96zM30.70 634.05h1.96v1.96h-1.96zM34.62 634.05h1.96v1.96h-1.96zM36.58 634.05h1.96v1.96h-1.96zM42.47 634.05h1.96v1.96h-1.96zM44.43 634.05h1.96v1.96h-1.96zM46.39 634.05h1.96v1.96h-1.96zM50.31 634.05h1.96v1.96h-1.96zM52.27 634.05h1.96v1.96h-1.96zM54.23 634.05h1.96v1.96h-1.96zM56.19 634.05h1.96v1.96h-1.96zM58.15 634.05h1.96v1.96h-1.96zM67.96 634.05h1.96v1.96h-1.96zM69.92 634.05h1.96v1.96h-1.96zM73.84 634.05h1.96v1.96h-1.96zM79.72 634.05h1.96v1.96h-1.96zM85.61 634.05h1.96v1.96h-1.96zM87.57 634.05h1.96v1.96h-1.96zM93.45 634.05h1.96v1.96h-1.96zM95.41 634.05h1.96v1.96h-1.96zM97.37 634.05h1.96v1.96h-1.96zM99.33 634.05h1.96v1.96h-1.96zM101.30 634.05h1.96v1.96h-1.96zM103.26 634.05h1.96v1.96h-1.96zM105.22 634.05h1.96v1.96h-1.96zM109.14 634.05h1.96v1.96h-1.96zM46.39 636.01h1.96v1.96h-1.96zM52.27 636.01h1.96v1.96h-1.96zM58.15 636.01h1.96v1.96h-1.96zM60.11 636.01h1.96v1.96h-1.96zM64.04 636.01h1.96v1.96h-1.96zM67.96 636.01h1.96v1.96h-1.96zM75.80 636.01h1.96v1.96h-1.96zM91.49 636.01h1.96v1.96h-1.96zM93.45 636.01h1.96v1.96h-1.96zM101.30 636.01h1.96v1.96h-1.96zM103.26 636.01h1.96v1.96h-1.96zM107.18 636.01h1.96v1.96h-1.96zM109.14 636.01h1.96v1.96h-1.96zM30.70 637.97h1.96v1.96h-1.96zM32.66 637.97h1.96v1.96h-1.96zM34.62 637.97h1.96v1.96h-1.96zM36.58 637.97h1.96v1.96h-1.96zM38.54 637.97h1.96v1.96h-1.96zM40.50 637.97h1.96v1.96h-1.96zM42.47 637.97h1.96v1.96h-1.96zM46.39 637.97h1.96v1.96h-1.96zM54.23 637.97h1.96v1.96h-1.96zM58.15 637.97h1.96v1.96h-1.96zM60.11 637.97h1.96v1.96h-1.96zM62.08 637.97h1.96v1.96h-1.96zM69.92 637.97h1.96v1.96h-1.96zM73.84 637.97h1.96v1.96h-1.96zM77.76 637.97h1.96v1.96h-1.96zM85.61 637.97h1.96v1.96h-1.96zM87.57 637.97h1.96v1.96h-1.96zM91.49 637.97h1.96v1.96h-1.96zM93.45 637.97h1.96v1.96h-1.96zM97.37 637.97h1.96v1.96h-1.96zM101.30 637.97h1.96v1.96h-1.96zM103.26 637.97h1.96v1.96h-1.96zM105.22 637.97h1.96v1.96h-1.96zM107.18 637.97h1.96v1.96h-1.96zM109.14 637.97h1.96v1.96h-1.96zM30.70 639.93h1.96v1.96h-1.96zM42.47 639.93h1.96v1.96h-1.96zM46.39 639.93h1.96v1.96h-1.96zM52.27 639.93h1.96v1.96h-1.96zM60.11 639.93h1.96v1.96h-1.96zM66.00 639.93h1.96v1.96h-1.96zM67.96 639.93h1.96v1.96h-1.96zM73.84 639.93h1.96v1.96h-1.96zM75.80 639.93h1.96v1.96h-1.96zM77.76 639.93h1.96v1.96h-1.96zM79.72 639.93h1.96v1.96h-1.96zM83.65 639.93h1.96v1.96h-1.96zM85.61 639.93h1.96v1.96h-1.96zM91.49 639.93h1.96v1.96h-1.96zM93.45 639.93h1.96v1.96h-1.96zM101.30 639.93h1.96v1.96h-1.96zM107.18 639.93h1.96v1.96h-1.96zM30.70 641.90h1.96v1.96h-1.96zM34.62 641.90h1.96v1.96h-1.96zM36.58 641.90h1.96v1.96h-1.96zM38.54 641.90h1.96v1.96h-1.96zM42.47 641.90h1.96v1.96h-1.96zM46.39 641.90h1.96v1.96h-1.96zM48.35 641.90h1.96v1.96h-1.96zM50.31 641.90h1.96v1.96h-1.96zM52.27 641.90h1.96v1.96h-1.96zM54.23 641.90h1.96v1.96h-1.96zM56.19 641.90h1.96v1.96h-1.96zM62.08 641.90h1.96v1.96h-1.96zM66.00 641.90h1.96v1.96h-1.96zM73.84 641.90h1.96v1.96h-1.96zM75.80 641.90h1.96v1.96h-1.96zM79.72 641.90h1.96v1.96h-1.96zM85.61 641.90h1.96v1.96h-1.96zM93.45 641.90h1.96v1.96h-1.96zM95.41 641.90h1.96v1.96h-1.96zM97.37 641.90h1.96v1.96h-1.96zM99.33 641.90h1.96v1.96h-1.96zM101.30 641.90h1.96v1.96h-1.96zM103.26 641.90h1.96v1.96h-1.96zM109.14 641.90h1.96v1.96h-1.96zM30.70 643.86h1.96v1.96h-1.96zM34.62 643.86h1.96v1.96h-1.96zM36.58 643.86h1.96v1.96h-1.96zM38.54 643.86h1.96v1.96h-1.96zM42.47 643.86h1.96v1.96h-1.96zM50.31 643.86h1.96v1.96h-1.96zM54.23 643.86h1.96v1.96h-1.96zM58.15 643.86h1.96v1.96h-1.96zM67.96 643.86h1.96v1.96h-1.96zM69.92 643.86h1.96v1.96h-1.96zM71.88 643.86h1.96v1.96h-1.96zM79.72 643.86h1.96v1.96h-1.96zM87.57 643.86h1.96v1.96h-1.96zM89.53 643.86h1.96v1.96h-1.96zM91.49 643.86h1.96v1.96h-1.96zM93.45 643.86h1.96v1.96h-1.96zM30.70 645.82h1.96v1.96h-1.96zM34.62 645.82h1.96v1.96h-1.96zM36.58 645.82h1.96v1.96h-1.96zM38.54 645.82h1.96v1.96h-1.96zM42.47 645.82h1.96v1.96h-1.96zM46.39 645.82h1.96v1.96h-1.96zM48.35 645.82h1.96v1.96h-1.96zM56.19 645.82h1.96v1.96h-1.96zM64.04 645.82h1.96v1.96h-1.96zM66.00 645.82h1.96v1.96h-1.96zM67.96 645.82h1.96v1.96h-1.96zM69.92 645.82h1.96v1.96h-1.96zM71.88 645.82h1.96v1.96h-1.96zM77.76 645.82h1.96v1.96h-1.96zM81.69 645.82h1.96v1.96h-1.96zM83.65 645.82h1.96v1.96h-1.96zM91.49 645.82h1.96v1.96h-1.96zM93.45 645.82h1.96v1.96h-1.96zM95.41 645.82h1.96v1.96h-1.96zM103.26 645.82h1.96v1.96h-1.96zM105.22 645.82h1.96v1.96h-1.96zM107.18 645.82h1.96v1.96h-1.96zM30.70 647.78h1.96v1.96h-1.96zM42.47 647.78h1.96v1.96h-1.96zM48.35 647.78h1.96v1.96h-1.96zM50.31 647.78h1.96v1.96h-1.96zM54.23 647.78h1.96v1.96h-1.96zM58.15 647.78h1.96v1.96h-1.96zM60.11 647.78h1.96v1.96h-1.96zM69.92 647.78h1.96v1.96h-1.96zM75.80 647.78h1.96v1.96h-1.96zM79.72 647.78h1.96v1.96h-1.96zM85.61 647.78h1.96v1.96h-1.96zM87.57 647.78h1.96v1.96h-1.96zM93.45 647.78h1.96v1.96h-1.96zM95.41 647.78h1.96v1.96h-1.96zM99.33 647.78h1.96v1.96h-1.96zM103.26 647.78h1.96v1.96h-1.96zM105.22 647.78h1.96v1.96h-1.96zM107.18 647.78h1.96v1.96h-1.96zM30.70 649.74h1.96v1.96h-1.96zM32.66 649.74h1.96v1.96h-1.96zM34.62 649.74h1.96v1.96h-1.96zM36.58 649.74h1.96v1.96h-1.96zM38.54 649.74h1.96v1.96h-1.96zM40.50 649.74h1.96v1.96h-1.96zM42.47 649.74h1.96v1.96h-1.96zM46.39 649.74h1.96v1.96h-1.96zM56.19 649.74h1.96v1.96h-1.96zM58.15 649.74h1.96v1.96h-1.96zM66.00 649.74h1.96v1.96h-1.96zM75.80 649.74h1.96v1.96h-1.96zM77.76 649.74h1.96v1.96h-1.96zM81.69 649.74h1.96v1.96h-1.96zM91.49 649.74h1.96v1.96h-1.96zM93.45 649.74h1.96v1.96h-1.96zM95.41 649.74h1.96v1.96h-1.96zM97.37 649.74h1.96v1.96h-1.96zM105.22 649.74h1.96v1.96h-1.96z' fill='#111'/><defs><linearGradient id='gpen' x1='0' y1='1' x2='1' y2='0'><stop offset='0' stop-color='#F99B31'/><stop offset='1' stop-color='#F99B31' stop-opacity='0'/></linearGradient><linearGradient id='gblue' x1='0' y1='0' x2='0' y2='1'><stop offset='0' stop-color='#4A8BF5' stop-opacity='0.85'/><stop offset='1' stop-color='#4A8BF5' stop-opacity='0'/></linearGradient><linearGradient id='ggreen' x1='0' y1='0' x2='0' y2='1'><stop offset='0' stop-color='#5ECB8B' stop-opacity='0.85'/><stop offset='1' stop-color='#5ECB8B' stop-opacity='0'/></linearGradient></defs><path d='M301.8 278.9 H293.2 Q289.6 278.9 289.6 282.5 V302.8 Q289.6 306.5 293.2 306.5 H310.9 Q314.5 306.5 314.5 302.8 V288.6' fill='none' stroke='#F99B31' stroke-width='2.7' stroke-linecap='round' stroke-linejoin='round' /><path d='M297 294.5 V290.8 L309.5 277.5 L313.5 281.3 L300.8 294.5 Z' fill='url(#gpen)'/><text x='302' y='303.4' text-anchor='middle' font-family='Liberation Sans' font-weight='bold' font-size='8.5' fill='#F99B31' stroke='#F99B31' stroke-width='0.35'>PDF</text><rect x='506.2' y='276' width='16' height='16' rx='3.5' fill='url(#gblue)'/><rect x='513.9' y='281.3' width='22.3' height='25.3' rx='3' fill='#fff' stroke='#4A8BF5' stroke-width='2.8'/><path d='M519.6 287.2 H527.3 M519.6 290.9 H523.5' fill='none' stroke='#4A8BF5' stroke-width='2' stroke-linecap='round' stroke-linejoin='round' /><path d='M522.6 295 L524.9 301.5 L527.2 296.3 L529.6 301.5 L531.8 295' fill='none' stroke='#4A8BF5' stroke-width='1.9' stroke-linecap='round' stroke-linejoin='round' /><rect x='726.2' y='276' width='16' height='15' rx='3.5' fill='url(#ggreen)'/><rect x='730.8' y='282.4' width='25.4' height='24.2' rx='3' fill='#fff' stroke='#5ECB8B' stroke-width='2.8'/><circle cx='737.1' cy='289' r='2' fill='#5ECB8B'/><path d='M741.2 302.3 L746.8 295.2 L752.4 302.3 Z' fill='#5ECB8B' stroke='#5ECB8B' stroke-width='2' stroke-linejoin='round'/><g fill='none' stroke='#F07D1A' stroke-width='2'><rect x='813' y='381' width='5.2' height='5.2'/><rect x='821.8' y='381' width='5.2' height='5.2'/><rect x='813' y='389.8' width='5.2' height='5.2'/><rect x='821.8' y='389.8' width='5.2' height='5.2'/></g><path d='M920 379.8 H924 M913.5 383.3 H930.8 M915.2 383 V394.5 Q915.2 396.2 917 396.2 H927.2 Q929 396.2 929 394.5 V383 M920.2 386.3 V392 M923.8 386.3 V392' fill='none' stroke='#555' stroke-width='1.9' stroke-linecap='round' stroke-linejoin='round' /><path d='M169.8 751 H175.2 L172.5 753.8 Z' fill='#666'/><path d='M21.2 746.3 L15.2 752 L21.2 757.6 M26.3 746.3 L20.3 752 L26.3 757.6' fill='none' stroke='#A5A5A5' stroke-width='1.3' stroke-linecap='round' stroke-linejoin='round' /><path d='M52.5 746.3 L46 752 L52.5 757.6' fill='none' stroke='#A5A5A5' stroke-width='1.3' stroke-linecap='round' stroke-linejoin='round' /><path d='M191.5 746.4 L198 752 L191.5 757.7' fill='none' stroke='#A5A5A5' stroke-width='1.3' stroke-linecap='round' stroke-linejoin='round' /><path d='M217.5 746.4 L223.5 752 L217.5 757.7 M222.6 746.4 L228.6 752 L222.6 757.7' fill='none' stroke='#A5A5A5' stroke-width='1.3' stroke-linecap='round' stroke-linejoin='round' /><path d='M243.6 754.3 H245 M243.6 754.3 V744.2 H250.8 M252.4 746.4 H258.9 M254.4 744.3 L252.3 746.4 L254.4 748.5 M247.3 749.3 H258.9 V758.7 H247.3 Z' fill='none' stroke='#A3A3A3' stroke-width='1.1' stroke-linecap='round' stroke-linejoin='round' stroke-linecap='butt' stroke-linejoin='miter'/><path d='M273 754 H271.4 V744.2 H282.6 V747.5 M275.3 752 V749 H286.8 V758.7 H279.2 M271.4 756.4 H277.6 M275.6 754.3 L277.7 756.4 L275.6 758.6' fill='none' stroke='#A3A3A3' stroke-width='1.1' stroke-linecap='round' stroke-linejoin='round' stroke-linecap='butt' stroke-linejoin='miter'/>
</svg>
</body></html>
